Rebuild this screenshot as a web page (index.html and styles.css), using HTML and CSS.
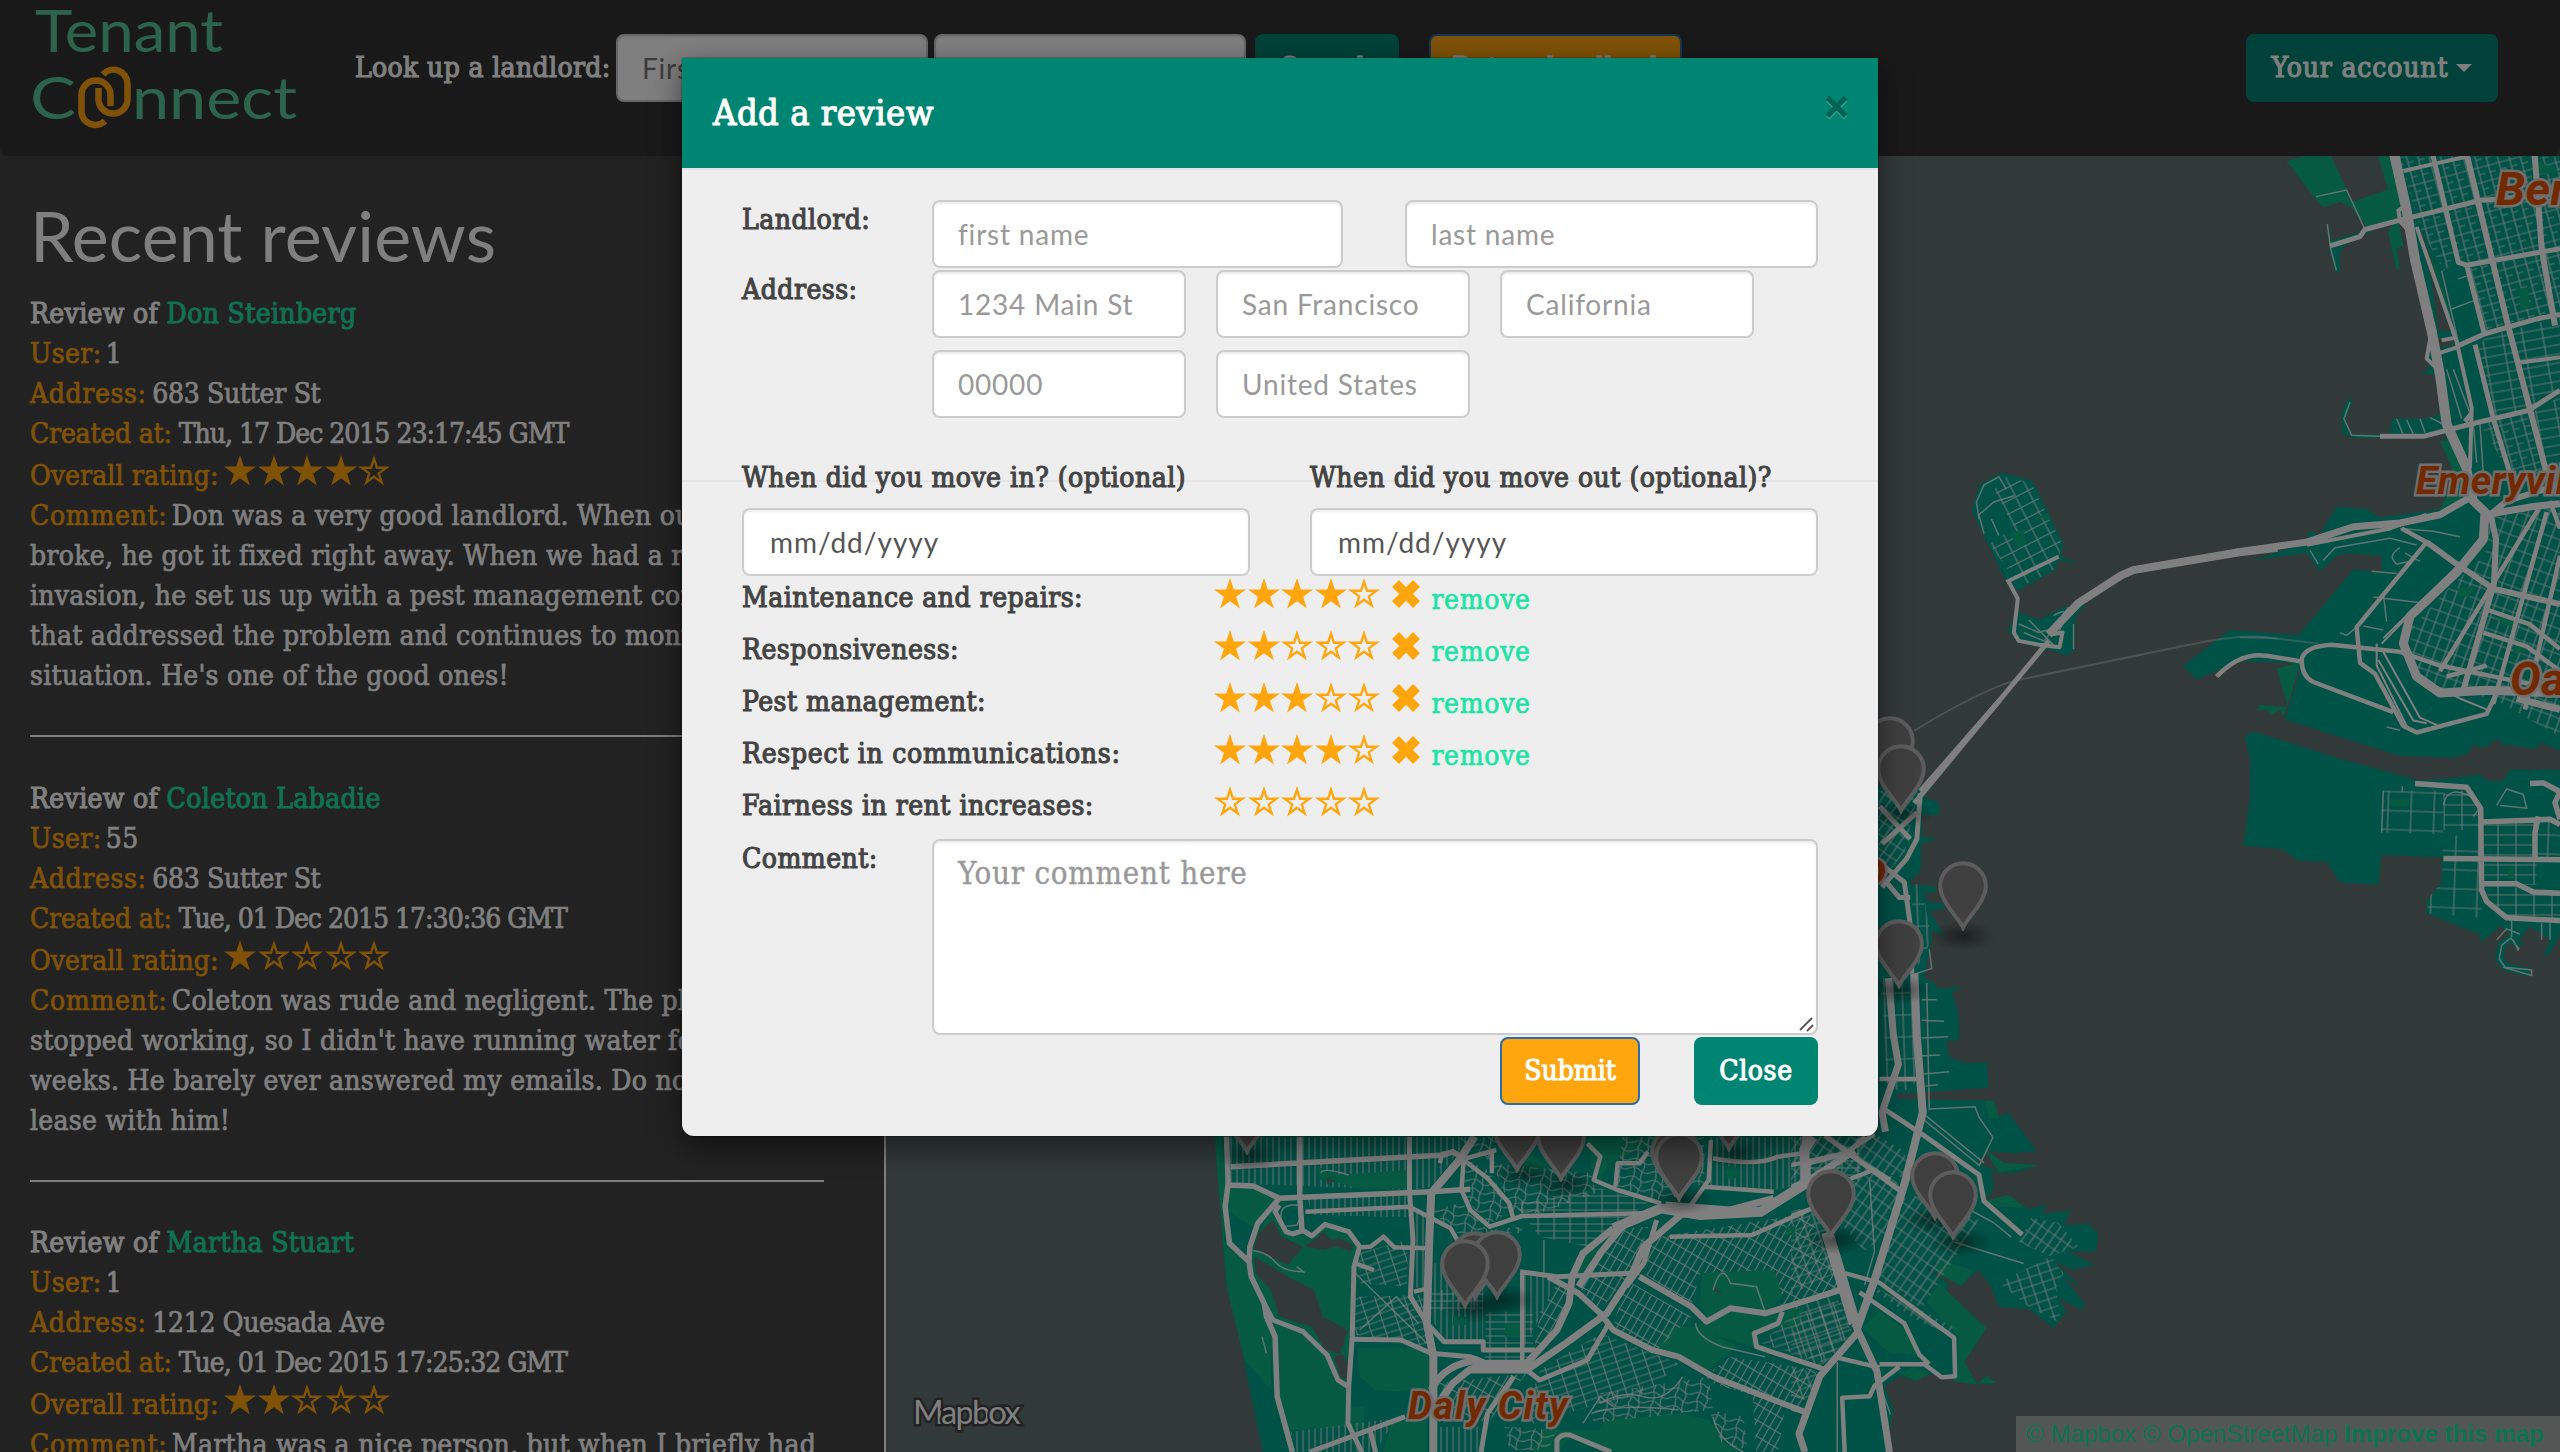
FILE: index.html
```html
<!DOCTYPE html>
<html lang="en">
<head>
<meta charset="utf-8">
<title>Tenant Connect</title>
<link rel="stylesheet" href="styles.css">
</head>
<body>
<svg class="defs" width="0" height="0" aria-hidden="true">
  <symbol id="star" viewBox="0 0 32 31"><path d="M16 0 19.8 11.6H32L22.1 18.8 25.9 30.4 16 23.2 6.1 30.4 9.9 18.8 0 11.6H12.2Z"/></symbol>
  <symbol id="star-o" viewBox="0 0 32 31"><path fill-rule="evenodd" d="M16 0 19.8 11.6H32L22.1 18.8 25.9 30.4 16 23.2 6.1 30.4 9.9 18.8 0 11.6H12.2ZM16 7.6 13.9 13.9H7.2L12.6 17.9 10.5 24.3 16 20.3 21.5 24.3 19.4 17.9 24.8 13.9H18.1Z"/></symbol>
  <symbol id="remove" viewBox="0 0 28 28"><path d="M7 0 14 7.2 21 0 28 7 20.8 14 28 21 21 28 14 20.8 7 28 0 21 7.2 14 0 7Z"/></symbol>
  <symbol id="pin" viewBox="0 0 50 70"><path d="M25 66.5C21 57 2.2 41 2.2 25a22.8 22.8 0 0 1 45.6 0C47.8 41 29 57 25 66.5Z"/></symbol>
</svg>

<header class="navbar">
  <svg class="logo" width="300" height="140" viewBox="0 0 300 140">
    <text x="35" y="52" textLength="188" lengthAdjust="spacingAndGlyphs">Tenant</text>
    <text x="30" y="118.500" textLength="46" lengthAdjust="spacingAndGlyphs">C</text>
    <text x="132" y="118.500" textLength="165" lengthAdjust="spacingAndGlyphs">nnect</text>
    <g class="links">
      <path d="M103 74.500a14 14 0 0 1 24.500 9V98a14 14 0 0 1-29 2V88"/>
      <path d="M105 121a14 14 0 0 1-23.500-8V95a14.500 14.500 0 0 1 29 0V106"/>
    </g>
  </svg>
  <div class="lookup">
    <span class="lookup-label">Look up a landlord:</span>
    <input class="field" placeholder="First name">
    <input class="field" placeholder="Last name">
    <button class="btn btn-green btn-search">Search</button>
    <button class="btn btn-orange btn-rate">Rate a landlord</button>
  </div>
  <button class="btn btn-green btn-account">Your account<i class="caret"></i></button>
</header>

<main class="main">
  <section class="reviews">
    <h1>Recent reviews</h1>
    <article class="review">
      <h2>Review of <a>Don Steinberg</a></h2>
      <p class="user"><b>User:</b> 1</p>
      <p class="addr"><b>Address:</b> 683 Sutter St</p>
      <p class="date"><b>Created at:</b> Thu, 17 Dec 2015 23:17:45 GMT</p>
      <p class="rating"><b>Overall rating:</b><span class="stars"><svg><use href="#star"/></svg><svg><use href="#star"/></svg><svg><use href="#star"/></svg><svg><use href="#star"/></svg><svg><use href="#star-o"/></svg></span></p>
      <p class="comment"><b>Comment:</b> Don was a very good landlord. When our<br>broke, he got it fixed right away. When we had a roach<br>invasion, he set us up with a pest management company<br>that addressed the problem and continues to monitor<br>situation. He's one of the good ones!</p>
    </article>
    <article class="review">
      <h2>Review of <a>Coleton Labadie</a></h2>
      <p class="user"><b>User:</b> 55</p>
      <p class="addr"><b>Address:</b> 683 Sutter St</p>
      <p class="date"><b>Created at:</b> Tue, 01 Dec 2015 17:30:36 GMT</p>
      <p class="rating"><b>Overall rating:</b><span class="stars"><svg><use href="#star"/></svg><svg><use href="#star-o"/></svg><svg><use href="#star-o"/></svg><svg><use href="#star-o"/></svg><svg><use href="#star-o"/></svg></span></p>
      <p class="comment"><b>Comment:</b> Coleton was rude and negligent. The plumbing<br>stopped working, so I didn't have running water for<br>weeks. He barely ever answered my emails. Do not<br>lease with him!</p>
    </article>
    <article class="review">
      <h2>Review of <a>Martha Stuart</a></h2>
      <p class="user"><b>User:</b> 1</p>
      <p class="addr"><b>Address:</b> 1212 Quesada Ave</p>
      <p class="date"><b>Created at:</b> Tue, 01 Dec 2015 17:25:32 GMT</p>
      <p class="rating"><b>Overall rating:</b><span class="stars"><svg><use href="#star"/></svg><svg><use href="#star"/></svg><svg><use href="#star-o"/></svg><svg><use href="#star-o"/></svg><svg><use href="#star-o"/></svg></span></p>
      <p class="comment"><b>Comment:</b> Martha was a nice person, but when I briefly had</p>
    </article>
  </section>

  <section class="map">
    <svg class="map-canvas" width="1674" height="1296" viewBox="886 156 1674 1296">
      <defs>
        <radialGradient id="shade"><stop offset="0" stop-opacity=".45"/><stop offset="1" stop-opacity="0"/></radialGradient>
        <pattern id="aV" width="6" height="40" patternUnits="userSpaceOnUse" patternTransform="scale(2.306 3)"><path class="street" d="M3 0V40"/></pattern>
        <pattern id="aG" width="16" height="7" patternUnits="userSpaceOnUse" patternTransform="scale(2.306 3)"><path class="street" d="M8 0V7M0 3H16"/></pattern>
        <pattern id="aR" width="7" height="14" patternUnits="userSpaceOnUse" patternTransform="scale(2.306 3) rotate(30)"><path class="street" d="M3 0V14M0 6H7"/></pattern>
        <pattern id="aS" width="14" height="7" patternUnits="userSpaceOnUse" patternTransform="scale(2.306 3) rotate(-18)"><path class="street" d="M7 0V7M0 3H14"/></pattern>
        <pattern id="aC" width="22" height="18" patternUnits="userSpaceOnUse" patternTransform="scale(2.306 3) rotate(12)"><path class="street" d="M0 4Q6 0 11 4T22 4M0 13Q6 9 11 13T22 13M4 0Q8 9 4 18M15 0Q11 9 15 18"/></pattern>
        <pattern id="bN" width="11" height="15" patternUnits="userSpaceOnUse" patternTransform="scale(3 1.823) rotate(-15)"><path class="street" d="M5 0V15M0 4H11M5 11H11"/></pattern>
        <pattern id="bH" width="20" height="9" patternUnits="userSpaceOnUse" patternTransform="scale(3 1.823) rotate(-10)"><path class="street" d="M6 0V9M0 4H20"/></pattern>
        <pattern id="bO" width="10" height="12" patternUnits="userSpaceOnUse" patternTransform="scale(3 1.823) rotate(20)"><path class="street" d="M5 0V12M0 5H10"/></pattern>
        <pattern id="bA" width="18" height="10" patternUnits="userSpaceOnUse" patternTransform="scale(3 1.823)"><path class="street" d="M6 0V10M0 5H18"/></pattern>
        <pattern id="bB" width="23" height="19" patternUnits="userSpaceOnUse" patternTransform="scale(3 1.823) rotate(2)"><path class="street" d="M10 0V19M0 9H23"/></pattern>
        <pattern id="cT" width="14" height="12" patternUnits="userSpaceOnUse" patternTransform="scale(2.01 2.376) rotate(-27)"><path class="street" d="M6 0V12M0 5H14"/></pattern>
        <pattern id="dR" width="8" height="12" patternUnits="userSpaceOnUse" patternTransform="scale(2.01 2.085) rotate(35)"><path class="street" d="M4 0V12M0 5H8"/></pattern>
        <pattern id="dS" width="11" height="9" patternUnits="userSpaceOnUse" patternTransform="scale(2.01 2.085) rotate(-18)"><path class="street" d="M4 0V9M0 5H11"/></pattern>
        <pattern id="dV" width="9" height="22" patternUnits="userSpaceOnUse" patternTransform="scale(2.01 2.085) rotate(-2)"><path class="street" d="M4 0V22M0 11H9"/></pattern>
      </defs>
      <rect class="water" x="886" y="156" width="1674" height="1296"/>

      <!-- Eastern shoreline and the southern piers -->
      <g transform="translate(1780 700) scale(.49745 .47959)">
        <path class="land" d="M197 180H310L285 200 320 215V240H285V284L317 288 284 300 283 355 258 384 312 388V402H292L295 420 330 425V436L300 440 330 490 303 480 305 500 290 580 308 588 320 602 360 598V604L345 608 358 650 360 710H335L340 745 375 758 415 755 420 808 290 818 230 822 235 832 415 835 440 870 458 860 516 940 470 945 420 940 400 965 440 985 520 970 470 987 425 985 430 1020 410 1045 460 1035 500 1062 536 1052 528 1072 585 1065 570 1095 620 1092 640 1115 635 1150 580 1150 632 1178 585 1188 550 1170 605 1225 570 1205 614 1260 606 1272 560 1245 575 1275 550 1310 500 1270 440 1265 425 1225 400 1190 385 1200 365 1222 290 1182 338 1215 335 1245 415 1310 370 1380 395 1425 435 1425 355 1420 300 1405 275 1420 240 1410 210 1430 228 1480 220 1520 222 1568H0V900H197Z"/>
        <path class="park" d="M320 1165 390 1190 365 1222 315 1195ZM320 1215 338 1235 415 1310 370 1380 395 1425 437 1424 415 1410 395 1427 350 1420 360 1330 295 1255ZM200 1275 260 1320 275 1365 220 1360 165 1310ZM413 835H430L440 870 420 875ZM410 935 450 965 520 970 440 985ZM10 1270 50 1265 30 1300 0 1305ZM15 1100 40 1105 30 1120 10 1115ZM410 1045 460 1032 495 1060 430 1055ZM240 1405 275 1420 300 1405 270 1390Z"/>
        <path fill="url(#dR)" d="M198 190H278L250 320 198 380ZM242 1040 300 1030 400 1085 285 1270 195 1205ZM140 1000 200 960 245 1020 215 1110 170 1150 120 1090ZM0 910H200L250 940 260 1000 190 980 120 990 0 1030ZM505 1080 560 1090 600 1140 540 1160 480 1130ZM160 1210 240 1250 355 1310 345 1325 270 1290Z"/>
        <path fill="url(#dS)" d="M0 1055 90 1070 122 1190 0 1250ZM0 1270 110 1235 140 1310 85 1390 0 1355ZM440 1215 545 1160 570 1195 555 1225 565 1300 500 1265ZM0 1380 85 1410 60 1460 0 1450Z"/>
        <path fill="url(#dV)" d="M202 580H270L280 790 245 820 215 800ZM262 384H284L305 500 275 560Z"/>
        <path class="street thin" d="M300 520 305 560 270 572M300 853 392 848 400 870 428 912 400 972M285 625H315M285 668 330 670M285 705 338 702M285 742 322 740M290 780 340 775M292 805 318 802M285 860 410 965M295 590 300 855M350 1130 490 1175M385 1065 430 1090 465 1120M180 1000 190 1150 170 1220M283 870 400 970M115 1568V1380M0 1440 40 1455M205 1440 222 1490"/>
        <g class="road">
          <path stroke-width="5" d="M442 0 282 190M282 195 275 290 255 330 205 390M200 340 250 380 262 470 265 570M200 222 262 290M205 300 275 235M210 375 240 412H262M90 908 240 1022M205 850 285 905 400 990 410 1045 487 1115"/>
          <path stroke-width="8" d="M270 570 275 700 287 860 250 1010 190 1210 155 1310"/>
          <path stroke-width="7" d="M218 580 228 700 238 760 205 860 212 900M0 1030 60 1000 150 940"/>
          <path stroke-width="12" d="M95 1110 150 1300"/>
          <path stroke-width="7" d="M150 1300 195 1400 220 1568M155 1320 80 1410 38 1530 50 1568"/>
          <path stroke-width="4.500" d="M0 1085 65 1060M0 1270 130 1225M130 1195 200 1215 350 1330 352 1410 325 1412 290 1385 200 1385M160 1235 250 1300 280 1365 300 1385M130 1568 125 1455 180 1452 190 1430 240 1390M0 1365 90 1395M0 1470 50 1485M0 975 130 945 190 905M110 1370 200 1392M50 900 45 1000M200 790H285"/>
        </g>
      </g>

      <!-- Western neighbourhoods and Daly City -->
      <g transform="translate(1210 1130) scale(.43368 .33333)">
        <path class="land" d="M10 0H1340V966H122L90 770 68 620 40 480 28 330 22 160Z"/>
        <path class="park" d="M10 18H24L40 170 120 175 160 210 115 275 95 290 40 240 32 330 50 350 90 400 120 520 140 600V780L80 690 40 480 28 300ZM95 340 140 250 180 310 235 318 270 285 325 305 342 350 328 420 325 770 318 890 180 900 150 820 135 560 90 400Z"/>
        <path class="park" d="M340 655 470 652 510 680V790L380 780 345 740ZM870 360H915L880 430H845ZM1060 590H1120L1220 650 1180 680 1150 720 1030 650ZM1120 590 1150 570 1195 535 1285 550 1360 535V590L1260 600 1255 650 1150 610ZM725 60 790 120 720 130ZM870 20H960L1010 45 920 100 900 160 880 110Z"/>
        <path class="park" d="M770 900 900 900 910 870 1085 850 1150 870 1180 930 1220 966H930L840 910 800 966H740ZM420 870H500V966H400ZM320 830 355 830V900L320 880Z"/>
        <path fill="url(#aV)" d="M42 20H455V78L42 104ZM48 112 455 90V180L48 160ZM225 205 455 190V262L235 255ZM508 400H630V630H540L508 560ZM725 430 800 445 770 540 725 650ZM185 905 430 865 380 966H200ZM525 890H620V966H525ZM470 20H600L510 170 470 180ZM1150 20H1365V165L1300 180 1150 165ZM470 240 500 250V480L470 470Z"/>
        <path fill="url(#aG)" d="M700 220 900 175 1010 215 930 300 870 350 760 320ZM635 545H745V690H635ZM508 480H630V540H508ZM1380 100 1500 20V150L1390 180Z"/>
        <path fill="url(#aR)" d="M990 330 1380 250 1460 480 1320 540 1290 420 1130 430 1110 530 1000 430ZM920 300 1010 290 970 430 900 540 850 470 880 420ZM800 460 830 490 800 600 745 680 760 550ZM960 450 1110 560 1030 660 930 590ZM1160 720 1200 680 1400 720 1360 840 1160 760ZM1250 780 1330 800 1310 966H1260ZM520 760 730 730 640 880 530 830Z"/>
        <path fill="url(#aS)" d="M760 720 900 610 1080 700 1010 790 900 820 720 890ZM1330 570 1470 500 1480 610 1420 700 1270 640ZM335 500 500 495V650L335 615ZM340 370 455 330V470L345 460Z"/>
        <path fill="url(#aC)" d="M580 80 640 120 700 240 640 285 585 200ZM650 100 880 130 890 190 760 250 700 250ZM950 20H1140V160L1030 210 940 170ZM570 20 670 20 650 100ZM900 790 1150 740 1160 840 1080 850 880 880ZM680 890 800 900 780 960H690ZM505 240 580 220 640 300 720 290V310H570ZM1150 840 1230 860 1240 960 1180 940Z"/>
        <path class="park" d="M248 110 300 135 455 120V175L350 178 300 160 255 150ZM1135 430 1210 425 1300 420 1320 500 1280 548 1195 530 1150 570 1130 520ZM680 580H715V620H680ZM1330 290H1350V315H1325ZM560 560H590V585H560Z"/>
        <ellipse class="park" cx="1203" cy="128" rx="14" ry="22"/>
        <path class="water" d="M145 270 165 320 215 350 180 405 130 375 100 355 112 310ZM218 350 250 318 262 305 280 330 300 325 330 345 325 362 290 350 262 360ZM103 380 180 440 240 480 260 560 318 600 300 672 265 660 235 590 160 560 140 480 105 430ZM285 680 305 672 318 700 322 755 300 740ZM268 142 290 152 270 162ZM1155 465 1182 490 1165 485Z"/>
        <path class="street thin" d="M100 362Q130 365 150 395T215 425M200 410 218 428M770 330V435M335 430 500 640M345 600 430 500 480 580M1160 480Q1180 390 1200 460L1260 470 1280 545M1120 580Q1120 620 1180 650L1280 680M1160 860Q1170 930 1230 966M900 820Q950 780 1000 800T1090 740M880 850Q950 820 1080 840M860 880 900 800 930 830M120 620 130 670M255 130Q260 110 320 135M170 290Q150 230 190 225T200 285Z"/>
        <g class="road">
          <path stroke-width="5.500" d="M38 20 42 160 35 230 45 340 90 395 95 440 125 520 130 560 150 620 155 800 190 966M42 165 100 168 160 205 510 185 600 178M207 20V200L212 300M48 110 540 75 560 65 585 85M90 395 92 350 110 280 160 205"/>
          <path stroke-width="5" d="M125 520 145 570 215 605 270 675 295 750 318 770M160 225 150 245 175 305 190 312 215 302 235 318 265 283 320 305 345 350 332 410 328 620 320 770 318 880 350 966M460 20V185L468 330 462 500 500 580 540 635H630V660H750M230 966 450 860M370 905 382 966"/>
          <path stroke-width="8" d="M610 20 575 90 510 190 505 350 500 580 515 680V966"/>
          <path stroke-width="4.500" d="M530 100 535 72 560 65 640 145 690 220 700 270M220 245 460 230 555 295 570 330M585 85 580 180 600 240 645 290 720 258 1000 250M590 85 660 60M650 60V130M870 40 900 80 885 150 940 180 1040 220M1010 65 990 100H940L935 170M1140 170 1300 185M1060 320 1250 315 1380 240M345 352 370 350 400 320 425 352 505 355M720 430V690M335 400 378 420M470 485 505 475M1155 30 1150 150 1090 260M1160 85Q1260 110 1310 80L1365 70M1380 100 1470 70 1510 20M1470 70 1568 150M1470 150 1530 120"/>
          <path stroke-width="10" d="M1390 20 1370 60 1375 160 1270 245 1130 255 1040 235 930 295"/>
          <path stroke-width="7" d="M1300 205 1200 240 1050 225M930 295 860 370 835 440 828 520 800 600 730 700 640 700 600 718 560 760 520 830M1090 250 1000 350 970 440 915 550 820 640 730 720H600M510 780Q540 700 620 690M950 290 900 370 850 470"/>
          <path stroke-width="5" d="M715 425 800 440 990 428M1030 270 1000 400 960 470M330 628 440 630 510 670 600 680 640 700M730 720 760 750 870 690 920 580M700 740 640 850 625 966M800 966V930Q810 910 830 915L925 966"/>
          <path stroke-width="6" d="M780 440 850 490 900 550 930 600 1020 660 1080 680 1160 740 1370 845M990 440 1110 530 1145 575 1200 535 1280 550 1455 480"/>
          <path stroke-width="5" d="M1320 545 1310 580 1255 610 1260 650 1410 715"/>
        </g>
      </g>

      <!-- Berkeley, Oakland and Alameda -->
      <g transform="translate(2240 150) scale(.33333 .54847)">
        <path class="land" d="M262 130 275 165 360 150 375 138 395 148 310 175 298 190 300 222H286L268 180Z"/>
        <path class="land" d="M450 0H960V1095L900 1080 890 1092 790 1085 770 1073 735 1090 700 1085 680 1102 640 1108 480 1105 135 1038 180 950 150 935 0 932-130 965-171 941-30 875 0 876 175 885 340 765 425 770V740L320 735 290 740 240 768 200 735 40 748 200 715 205 695 240 700 290 650 380 655 420 670 600 655 660 570 620 530 610 510 560 525H340L305 515V480L320 455H338L315 495 335 518 450 519 455 490H560L605 480 600 410 540 407 570 398 553 375 575 330 510 150 480 100Z"/>
        <path class="park" d="M140 20 265 0 320 72 335 95 445 72 408 0H460L500 118 475 130 490 175 470 180 480 215 468 218 445 150 460 130 380 140 335 105 300 95 250 105 225 88ZM600 530H640L670 580 660 650 600 655 650 600ZM110 945 180 935 145 1010 130 1032 120 1020 95 1030 80 1020 50 1022 60 1012 145 1016ZM560 180 590 215 632 300 625 330 600 280Z"/>
        <path class="water" d="M530 140 550 155 600 250 640 330 595 330 575 240ZM585 345 640 340V355L590 362Z"/>
        <path class="land" d="M15 1070 40 1060 300 1110 540 1150 640 1145 720 1138 740 1150H790L810 1130H960V1430L930 1465 910 1470 930 1440 870 1415 840 1440 780 1415 725 1445 720 1430 560 1392V1370L605 1335V1290L425 1285 415 1340 300 1335 260 1298 170 1295 130 1275 10 1268 30 1180V1110Z"/>
        <path class="spit" d="M840 1452 815 1435 785 1450 778 1475 800 1490 870 1500"/>
        <path fill="url(#bN)" d="M478 12H960V180L690 210 650 205 610 220 535 135ZM685 215 960 185V300L740 330ZM720 500 860 480 910 590 810 590Z"/>
        <path fill="url(#bH)" d="M740 340 960 305V440L860 475 760 490 710 360ZM870 480 960 450V600L920 590Z"/>
        <path fill="url(#bO)" d="M750 670 900 655 960 650V1070L760 1000 570 980 510 920 515 870 640 790 735 740Z"/>
        <path fill="url(#bA)" d="M725 1225H890V1340H725ZM770 1340 960 1355V1405L800 1400 730 1350ZM610 1172 680 1168 720 1200V1240H610Z"/>
        <path fill="url(#bB)" d="M430 1168H610V1248L422 1244ZM610 1250H725V1400L562 1392V1365L605 1335ZM890 1225H960V1290H890Z"/>
        <path class="park" d="M838 252H865L868 290H840ZM650 800 700 795 690 815 655 812ZM775 848 825 855 815 870 780 862ZM820 900 870 905 850 918 820 915ZM452 1184H508V1196H452ZM805 1308H822V1328H805ZM870 12 960 40 900 45Z"/>
        <path class="street thin" d="M228 85 320 73 375 145M262 135 272 180 289 219M330 460 312 490 335 520 420 522M605 220 655 350M635 290 700 275M655 235 680 230M470 490 490 520M500 492 520 518M540 490 555 515M570 488 610 500M210 730 235 755M250 748 285 725 450 708 530 720M480 690 580 695 660 705M480 725Q440 740 470 755L510 750M495 735 540 750M395 768 470 772M400 815 535 825M430 810 440 860M370 868 430 875M300 880 320 885 350 870M440 1052 480 1058M425 1245 430 1168M487 1160V1170M835 1460 820 1440M770 1440 800 1420 840 1430M815 1400V1435M838 1457 812 1437 785 1450 778 1475 795 1490 875 1495V1505L790 1490M905 1410V1440M930 1410V1440M620 400 665 490M640 400 690 480M700 500 710 570M720 500 730 590M770 1195 800 1165 850 1175 860 1200 780 1195M610 1195Q620 1160 680 1175T700 1215"/>
        <path class="rail" d="M0 889Q100 888 235 900"/>
        <g class="road">
          <path stroke-width="10" d="M460 0 500 110 525 200 575 330 600 410 620 500 680 580"/>
          <path stroke-width="9" d="M680 580 700 640 735 660 730 710 650 770 510 850 490 900 530 960 600 990 740 985 960 990"/>
          <path stroke-width="7" d="M-10 733 200 715 340 687 480 680 600 665 700 630M735 665 880 650 960 645M830 1000 960 1020"/>
          <path stroke-width="4" d="M200 720 450 690 560 665M575 330 560 380 600 405M480 128 475 110 500 100M600 370 650 360M480 130 510 150M610 480 635 510"/>
          <path stroke-width="5" d="M270 175 360 158 375 145 480 128 720 92 960 80M575 0 655 205 680 210 960 180M680 210 735 340M705 355 760 490 810 590M650 358 735 335 890 308 960 300M420 522H550L690 500 865 475 960 438M675 495 695 480"/>
          <path stroke-width="6" d="M677 0 800 310 920 590M883 0 905 180 945 320"/>
          <path stroke-width="4" d="M490 38 680 12M530 140 650 350 695 470 690 580M835 388 960 378M605 347 640 343"/>
          <path stroke-width="6" d="M750 660 768 710 762 790 670 985M560 715 650 755 760 800 960 828M750 665 800 640 960 610"/>
          <path stroke-width="4.500" d="M485 690 560 715 350 870 360 935 405 955 490 1050 530 1062 740 1028 770 990M-70 960Q0 915 80 922L180 932M185 930Q190 905 275 902L480 915 600 940 960 985M185 930Q185 960 220 970L460 1025M895 655 600 950M920 660 760 1010M960 740 855 1020M740 838 870 865 960 910M730 880 860 905 960 950M620 960 740 940M930 640 960 690"/>
          <path stroke-width="2" d="M425 900 520 840M415 930 520 1040 560 1045M425 910 540 1035 590 1048M410 900V940L500 1050M430 890 650 760M530 960 660 1000 740 1020"/>
          <path stroke-width="5.500" d="M525 1155 680 1162 722 1200 725 1350 740 1370 800 1400 960 1405M725 1225 870 1222 930 1220 960 1230M610 1292 960 1294M725 1338H830L880 1353 960 1355M885 1290V1245L895 1215M870 1155 910 1154 960 1170 945 1190 960 1220"/>
        </g>
      </g>

      <!-- Treasure Island and the Bay Bridge -->
      <g transform="translate(1780 140) scale(.49745 .42092)">
        <path class="land" d="M445 790 508 810 570 960 565 990 600 1003 560 1000 555 1020 480 1070 455 1050 385 880 400 820ZM478 1120 520 1140 570 1110 615 1105 595 1130 590 1215 575 1225 540 1210 480 1195 458 1165Z"/>
        <path fill="url(#cT)" d="M455 800 505 815 568 960 553 1020 485 1062 420 960 470 920 430 830Z"/>
        <path class="park" d="M462 935 490 925 495 960 480 970ZM520 895 540 885 545 905Z"/>
        <path class="street thin" d="M400 900 395 860 410 820 440 800 455 830M410 935 400 890 430 860 470 845M440 940 425 900M480 1150 520 1170 550 1160 580 1110M490 1170 530 1190 560 1150M550 1130Q590 1100 560 1170M590 1150V1210M500 1140 550 1200"/>
        <path class="rail" d="M270 1403Q400 1310 470 1285L820 1200Q930 1170 1000 1184"/>
        <g class="road">
          <path stroke-width="4" d="M455 1050 560 990M460 1050 478 1090 470 1170 480 1190 525 1200 562 1205 568 1170 545 1175"/>
          <path stroke-width="5" d="M270 1576 540 1190"/>
          <path stroke-width="8" d="M540 1175 600 1100 685 1035 710 1022 920 980 1000 969"/>
        </g>
      </g>

      <g class="place">
        <text x="1408" y="1419" font-size="38" textLength="160">Daly City</text>
        <text x="2416" y="494" font-size="39">Emeryville</text>
        <text x="2496" y="205" font-size="47">Berkeley</text>
        <text x="2510" y="695" font-size="46">Oakland</text>
        <text x="1665" y="884" font-size="46" textLength="222">San Francisco</text>
      </g>

      <g class="shadows">
        <ellipse cx="1963" cy="936" rx="32" ry="15"/><ellipse cx="1901" cy="814" rx="32" ry="15"/><ellipse cx="1899" cy="990" rx="32" ry="15"/><ellipse cx="1835" cy="1240" rx="32" ry="15"/><ellipse cx="1935" cy="1220" rx="32" ry="15"/><ellipse cx="1960" cy="1242" rx="32" ry="15"/><ellipse cx="1525" cy="1174" rx="32" ry="15"/><ellipse cx="1565" cy="1184" rx="32" ry="15"/><ellipse cx="1682" cy="1200" rx="32" ry="15"/><ellipse cx="1735" cy="1154" rx="32" ry="15"/><ellipse cx="1475" cy="1308" rx="32" ry="15"/><ellipse cx="1503" cy="1300" rx="32" ry="15"/><ellipse cx="1250" cy="1156" rx="32" ry="15"/>
      </g>
      <g class="pins">
        <use href="#pin" x="1865" y="716" width="50" height="70"/>
        <use href="#pin" x="1876" y="744" width="50" height="70"/>
        <use href="#pin" x="1938" y="861" width="50" height="70"/>
        <use href="#pin" x="1874" y="919" width="50" height="70"/>
        <use href="#pin" x="1222" y="1085" width="50" height="70"/>
        <use href="#pin" x="1492" y="1103" width="50" height="70"/>
        <use href="#pin" x="1536" y="1112" width="50" height="70"/>
        <use href="#pin" x="1704" y="1082" width="50" height="70"/>
        <use href="#pin" x="1650" y="1127" width="50" height="70"/>
        <use href="#pin" x="1654" y="1132" width="50" height="70"/>
        <use href="#pin" x="1910" y="1151" width="50" height="70"/>
        <use href="#pin" x="1806" y="1169" width="50" height="70"/>
        <use href="#pin" x="1928" y="1170" width="50" height="70"/>
        <use href="#pin" x="1450" y="1231" width="50" height="70"/>
        <use href="#pin" x="1472" y="1230" width="50" height="70"/>
        <use href="#pin" x="1440" y="1239" width="50" height="70"/>
      </g>
      <text class="mapbox" x="913" y="1424" textLength="108">Mapbox</text>
    </svg>
    <div class="attribution">© Mapbox © OpenStreetMap <strong>Improve this map</strong></div>
  </section>
</main>

<div class="backdrop"></div>

<div class="modal">
  <div class="modal-header"><h3>Add a review</h3><span class="close">×</span></div>
  <form class="form">
    <div class="row"><label>Landlord:</label><div class="names"><input class="field" placeholder="first name"><input class="field" placeholder="last name"></div></div>
    <div class="row"><label>Address:</label><div class="address"><input class="field" placeholder="1234 Main St"><input class="field" placeholder="San Francisco"><input class="field" placeholder="California"><input class="field" placeholder="00000"><input class="field" placeholder="United States"></div></div>
    <div class="dates">
      <div><label>When did you move in? (optional)</label><input class="field" value="mm/dd/yyyy"></div>
      <div><label>When did you move out (optional)?</label><input class="field" value="mm/dd/yyyy"></div>
    </div>
    <div class="ratings">
      <div class="rate"><label>Maintenance and repairs:</label><span class="stars"><svg><use href="#star"/></svg><svg><use href="#star"/></svg><svg><use href="#star"/></svg><svg><use href="#star"/></svg><svg><use href="#star-o"/></svg></span><svg class="x"><use href="#remove"/></svg><a>remove</a></div>
      <div class="rate"><label>Responsiveness:</label><span class="stars"><svg><use href="#star"/></svg><svg><use href="#star"/></svg><svg><use href="#star-o"/></svg><svg><use href="#star-o"/></svg><svg><use href="#star-o"/></svg></span><svg class="x"><use href="#remove"/></svg><a>remove</a></div>
      <div class="rate"><label>Pest management:</label><span class="stars"><svg><use href="#star"/></svg><svg><use href="#star"/></svg><svg><use href="#star"/></svg><svg><use href="#star-o"/></svg><svg><use href="#star-o"/></svg></span><svg class="x"><use href="#remove"/></svg><a>remove</a></div>
      <div class="rate"><label class="wide">Respect in communications:</label><span class="stars"><svg><use href="#star"/></svg><svg><use href="#star"/></svg><svg><use href="#star"/></svg><svg><use href="#star"/></svg><svg><use href="#star-o"/></svg></span><svg class="x"><use href="#remove"/></svg><a>remove</a></div>
      <div class="rate"><label>Fairness in rent increases:</label><span class="stars"><svg><use href="#star-o"/></svg><svg><use href="#star-o"/></svg><svg><use href="#star-o"/></svg><svg><use href="#star-o"/></svg><svg><use href="#star-o"/></svg></span></div>
    </div>
    <div class="row"><label>Comment:</label><div class="comment-box"><textarea class="field" placeholder="Your comment here"></textarea><svg class="grip" width="16" height="16" viewBox="0 0 16 16"><path d="M1 14 13 2M8 15 14 9"/></svg></div></div>
    <div class="actions"><button class="btn btn-orange btn-submit" type="button">Submit</button><button class="btn btn-green btn-close" type="button">Close</button></div>
  </form>
</div>
</body>
</html>
```
FILE: styles.css
```css
* { box-sizing: border-box; }

body {
  margin: 0;
  width: 2560px;
  height: 1452px;
  overflow: hidden;
  position: relative;
  background: #444;
  color: #fff;
  font-family: "DejaVu Serif", "Liberation Serif", serif;
  font-stretch: condensed;
  font-size: 28px;
  line-height: 40px;
  letter-spacing: .28px;
  -webkit-text-stroke: .7px currentColor;
}

.defs { position: absolute; }
h1, h2, h3, p { margin: 0; font-weight: 400; }
a { color: #1ce3a5; }

/* Form controls */
.field {
  height: 68px;
  padding: 0 24px;
  border: 2px solid #ccc;
  border-radius: 8px;
  background: #fff;
  box-shadow: inset 0 2px 2px rgba(0, 0, 0, .075);
  color: #555;
  font: 28px Lato, sans-serif;
  letter-spacing: .8px;
  outline: 0;
  -webkit-text-stroke: 0;
}
.field::placeholder { color: #999; }

.btn {
  height: 68px;
  padding: 0;
  border: 2px solid transparent;
  border-radius: 8px;
  color: #fff;
  font: inherit;
  font-stretch: condensed;
  letter-spacing: .6px;
  -webkit-text-stroke: 1.1px currentColor;
}
.btn-green { background: #008573; border-color: #008573; }
.btn-orange { background: #ffa50e; border-color: #2e6da4; }

/* Top bar */
.navbar {
  display: flex;
  align-items: flex-start;
  height: 156px;
  background: #333;
  border-radius: 0 0 8px 8px;
}
.logo {
  flex: none;
  fill: #58c69a;
  font: 59px Lato, sans-serif;
  letter-spacing: 0;
  -webkit-text-stroke: 1.2px #58c69a;
}
.links { fill: none; stroke: #ffa50e; stroke-width: 6.5; }
.lookup { display: flex; align-items: center; margin: 34px 0 0 55px; }
.lookup-label { width: 261px; white-space: nowrap; letter-spacing: .35px; -webkit-text-stroke: 1.1px currentColor; }
.lookup .field { width: 312px; margin-right: 6px; }
.lookup .field::placeholder { color: #777; }
.btn-search { width: 144px; margin: 0 30px 0 3px; }
.btn-rate { width: 253px; }
.btn-account { width: 252px; margin: 34px 62px 0 auto; display: flex; align-items: center; justify-content: center; letter-spacing: .85px; }
.caret { margin-left: 8px; border: 8px solid transparent; border-top-color: #fff; border-bottom: 0; }

.main { display: flex; height: 1296px; }

/* Review list */
.reviews {
  flex: none;
  width: 886px;
  padding: 39px 60px 0 30px;
  border-right: 2px solid #fff;
  overflow: hidden;
  white-space: nowrap;
}
.reviews h1 {
  height: 99px;
  font: 70px/80px Lato, sans-serif;
  letter-spacing: .1px;
  -webkit-text-stroke: 0;
}
.review { padding-bottom: 39px; border-bottom: 2px solid #fff; margin-bottom: 41.5px; }
.review h2 { font-size: 28px; line-height: 40px; letter-spacing: .35px; -webkit-text-stroke: 1.1px currentColor; }
.review h2 a { -webkit-text-stroke: .9px currentColor; }
.review b { font-weight: 400; color: #ffa50e; }
.user b { letter-spacing: .4px; margin-right: -4px; }
.addr { letter-spacing: -.3px; }
.addr b { letter-spacing: .6px; margin-right: -2px; }
.date { letter-spacing: -1px; }
.date b { letter-spacing: -.2px; }
.comment b { letter-spacing: .7px; margin-right: -4px; }
.rating { display: flex; height: 42px; padding-top: 2px; }
.rating b { width: 194px; letter-spacing: .1px; }
.rating .stars { margin-top: -1px; }

.stars { display: flex; gap: 1.6px; fill: #ffa50e; }
.stars svg { width: 32px; height: 31px; }

/* Map */
.map { position: relative; flex: 1; }
.map-canvas { display: block; -webkit-text-stroke: 0; }
.water { fill: #647472; }
.land { fill: #00a28c; }
.park { fill: #0eb484; }
.spit { fill: none; stroke: #00a28c; stroke-width: 8; vector-effect: non-scaling-stroke; }
.street { fill: none; stroke: #fff; stroke-opacity: .75; stroke-width: 1.2; }
.thin { vector-effect: non-scaling-stroke; stroke-width: 1.5; }
.rail { fill: none; stroke: #fff; stroke-opacity: .35; stroke-width: 2; vector-effect: non-scaling-stroke; }
.road path { fill: none; stroke: #fff; stroke-linejoin: round; vector-effect: non-scaling-stroke; }
.place {
  fill: #e65200;
  stroke: #ddd;
  stroke-width: 5;
  paint-order: stroke;
  font-family: Roboto, sans-serif;
  font-weight: 700;
  font-style: italic;
  font-stretch: normal;
  letter-spacing: .4px;
}
.shadows { fill: url(#shade); }
.pins { fill: #7e7e7e; stroke: #b8b8b8; stroke-width: 4; }
.mapbox { font: 33px Lato, sans-serif; fill: #fff; stroke: #444; stroke-width: 5; paint-order: stroke; }
.attribution {
  position: absolute;
  right: 0;
  bottom: 0;
  width: 544px;
  height: 36px;
  padding-left: 10px;
  background: rgba(255, 255, 255, .42);
  color: #16e6a0;
  font: 24px/36px "Liberation Sans", sans-serif;
  letter-spacing: .05px;
  white-space: nowrap;
  -webkit-text-stroke: 0;
}

.backdrop { position: absolute; inset: 0; background: rgba(0, 0, 0, .5); }

/* Review dialog */
.modal {
  position: absolute;
  z-index: 1;
  left: 682px;
  top: 58px;
  width: 1196px;
  height: 1078px;
  border-radius: 0 0 12px 12px;
  background: #eee;
  box-shadow: 0 10px 30px rgba(0, 0, 0, .5), 0 0 2px rgba(0, 0, 0, .6);
  color: #444;
}
.modal::after { content: ""; position: absolute; z-index: -1; left: 0; right: 0; top: 422px; height: 2px; background: #e3e3e3; }
.modal-header {
  display: flex;
  align-items: center;
  justify-content: space-between;
  height: 112px;
  padding: 0 29px 0 31px;
  border-bottom: 2px solid #e5e5e5;
  background: #008573;
  color: #fff;
}
.modal-header h3 { font-size: 36px; letter-spacing: .5px; -webkit-text-stroke: 1.1px currentColor; }
.close {
  margin-top: -13px;
  color: #000;
  opacity: .25;
  font: 700 42px/42px "Liberation Sans", sans-serif;
  text-shadow: 0 2px 0 #fff;
}
.form { padding: 30px 60px 0; }
label { white-space: nowrap; letter-spacing: .48px; -webkit-text-stroke: 1.1px currentColor; }
label.wide { letter-spacing: .72px; }
.row { display: grid; grid-template-columns: 190px 886px; margin-bottom: 2px; }
.names { display: flex; justify-content: space-between; }
.names .field { width: 413px; }
.names .field:first-child { width: 411px; }
.address { display: grid; grid-template-columns: repeat(3, 254px); gap: 12px 30px; margin-bottom: 38px; }
.address .field { width: 254px; }
.dates { display: grid; grid-template-columns: 508px 508px; gap: 60px; }
.dates label { display: block; height: 50px; }
.dates .field { display: block; width: 508px; padding-left: 26px; letter-spacing: 1px; }
.ratings { padding: 2px 0 1px; }
.rate { display: flex; height: 52px; }
.rate label { width: 472px; }
.rate .x { width: 28px; height: 28px; margin: 2px 11px 0 12px; fill: #ffa50e; }
.rate a { padding-top: 2px; letter-spacing: .7px; }
.comment-box { position: relative; }
textarea.field {
  display: block;
  width: 886px;
  height: 196px;
  padding: 12px 24px;
  resize: none;
  font: 31px/40px "DejaVu Serif", serif;
  font-stretch: condensed;
  letter-spacing: .75px;
  -webkit-text-stroke: .4px currentColor;
}
.grip { position: absolute; right: 3px; bottom: 3px; fill: none; stroke: #555; stroke-width: 1.8; }
.actions { display: flex; justify-content: flex-end; gap: 54px; }
.btn-submit { width: 140px; letter-spacing: 0; }
.btn-close { width: 124px; }
```
